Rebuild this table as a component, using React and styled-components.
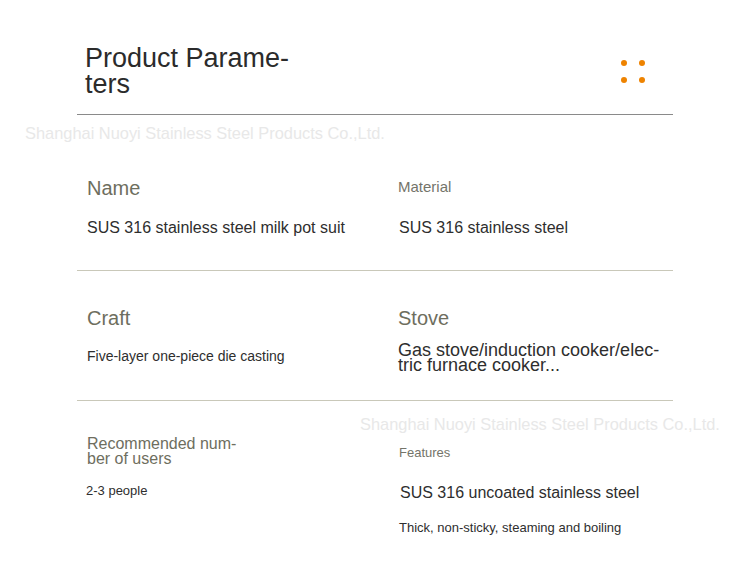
import React from "react"
import styled, { createGlobalStyle } from "styled-components"

const GlobalStyle = createGlobalStyle`
  html, body {
    margin: 0;
    padding: 0;
    background: #fff;
    font-family: "Liberation Sans", Arial, sans-serif;
  }
`

const Page = styled.div`
  position: relative;
  width: 750px;
  height: 579px;
  overflow: hidden;
  background: #fff;
`

const Sheet = styled.div`
  width: 596px;
  margin: 0 auto;
`

const Header = styled.div`
  display: flex;
  align-items: center;
  justify-content: space-between;
  padding: 45px 28px 17px 8px;
  border-bottom: 1px solid #8a8a8a;
`

const Title = styled.h1`
  margin: 0;
  max-width: 220px;
  font-size: 27px;
  line-height: 26px;
  font-weight: normal;
  color: #2b2b2b;
`

const Dots = styled.div`
  display: grid;
  grid-template-columns: 6px 6px;
  gap: 11px 12px;
`

const Dot = styled.span`
  width: 6px;
  height: 6px;
  border-radius: 50%;
  background: #ee8300;
`

const Row = styled.div`
  display: grid;
  grid-template-columns: 311px 1fr;
  box-sizing: border-box;
  height: ${p => p.$h}px;
  padding: ${p => p.$top}px 10px 0;
  border-bottom: ${p => (p.$last ? "none" : "1px solid #c9c8b9")};
`

const Cell = styled.div`
  display: flex;
  flex-direction: column;
  align-items: flex-start;
  padding-top: ${p => p.$top || 0}px;
  padding-left: ${p => p.$left || 0}px;
`

const Label = styled.div`
  font-size: ${p => p.$size}px;
  line-height: ${p => p.$lh}px;
  color: ${p => p.$color || "#6e6e5e"};
  max-width: ${p => p.$max || 300}px;
`

const Value = styled.div`
  margin-top: ${p => p.$mt}px;
  margin-left: ${p => p.$ml || 0}px;
  font-size: ${p => p.$size}px;
  line-height: ${p => p.$lh}px;
  color: #2e2e2e;
  max-width: ${p => p.$max || 300}px;
`

const Watermark = styled.div`
  position: absolute;
  left: ${p => p.$x}px;
  top: ${p => p.$y}px;
  font-size: 16.4px;
  line-height: 20px;
  color: #e8e8e8;
  white-space: nowrap;
  pointer-events: none;
`

export default function App() {
  return (
    <Page>
      <GlobalStyle />
      <Sheet>
        <Header>
          <Title>Product Parame&shy;ters</Title>
          <Dots>
            <Dot />
            <Dot />
            <Dot />
            <Dot />
          </Dots>
        </Header>

        <Row $h={156} $top={61}>
          <Cell>
            <Label $size={20} $lh={24}>Name</Label>
            <Value $mt={18} $size={16} $lh={20}>SUS 316 stainless steel milk pot suit</Value>
          </Cell>
          <Cell $top={1}>
            <Label $size={15} $lh={20} $color="#74746a">Material</Label>
            <Value $mt={21} $ml={1} $size={16} $lh={20}>SUS 316 stainless steel</Value>
          </Cell>
        </Row>

        <Row $h={130} $top={35}>
          <Cell>
            <Label $size={20} $lh={24}>Craft</Label>
            <Value $mt={17} $size={14} $lh={18}>Five-layer one-piece die casting</Value>
          </Cell>
          <Cell $top={-1}>
            <Label $size={20} $lh={24}>Stove</Label>
            <Value $mt={13} $size={18} $lh={15} $max={270}>
              Gas stove/induction cooker/elec&shy;tric furnace cooker...
            </Value>
          </Cell>
        </Row>

        <Row $h={178} $top={36} $last>
          <Cell>
            <Label $size={16} $lh={14.5} $max={165}>Recommended num&shy;ber of users</Label>
            <Value $mt={16} $ml={-1} $size={13} $lh={18}>2-3 people</Value>
          </Cell>
          <Cell $top={7} $left={1}>
            <Label $size={13} $lh={18} $color="#74746a">Features</Label>
            <Value $mt={21} $ml={1} $size={16} $lh={20}>SUS 316 uncoated stainless steel</Value>
            <Value $mt={16} $size={13} $lh={18}>Thick, non-sticky, steaming and boiling</Value>
          </Cell>
        </Row>
      </Sheet>

      <Watermark $x={25} $y={123}>Shanghai Nuoyi Stainless Steel Products Co.,Ltd.</Watermark>
      <Watermark $x={360} $y={414}>Shanghai Nuoyi Stainless Steel Products Co.,Ltd.</Watermark>
    </Page>
  )
}
